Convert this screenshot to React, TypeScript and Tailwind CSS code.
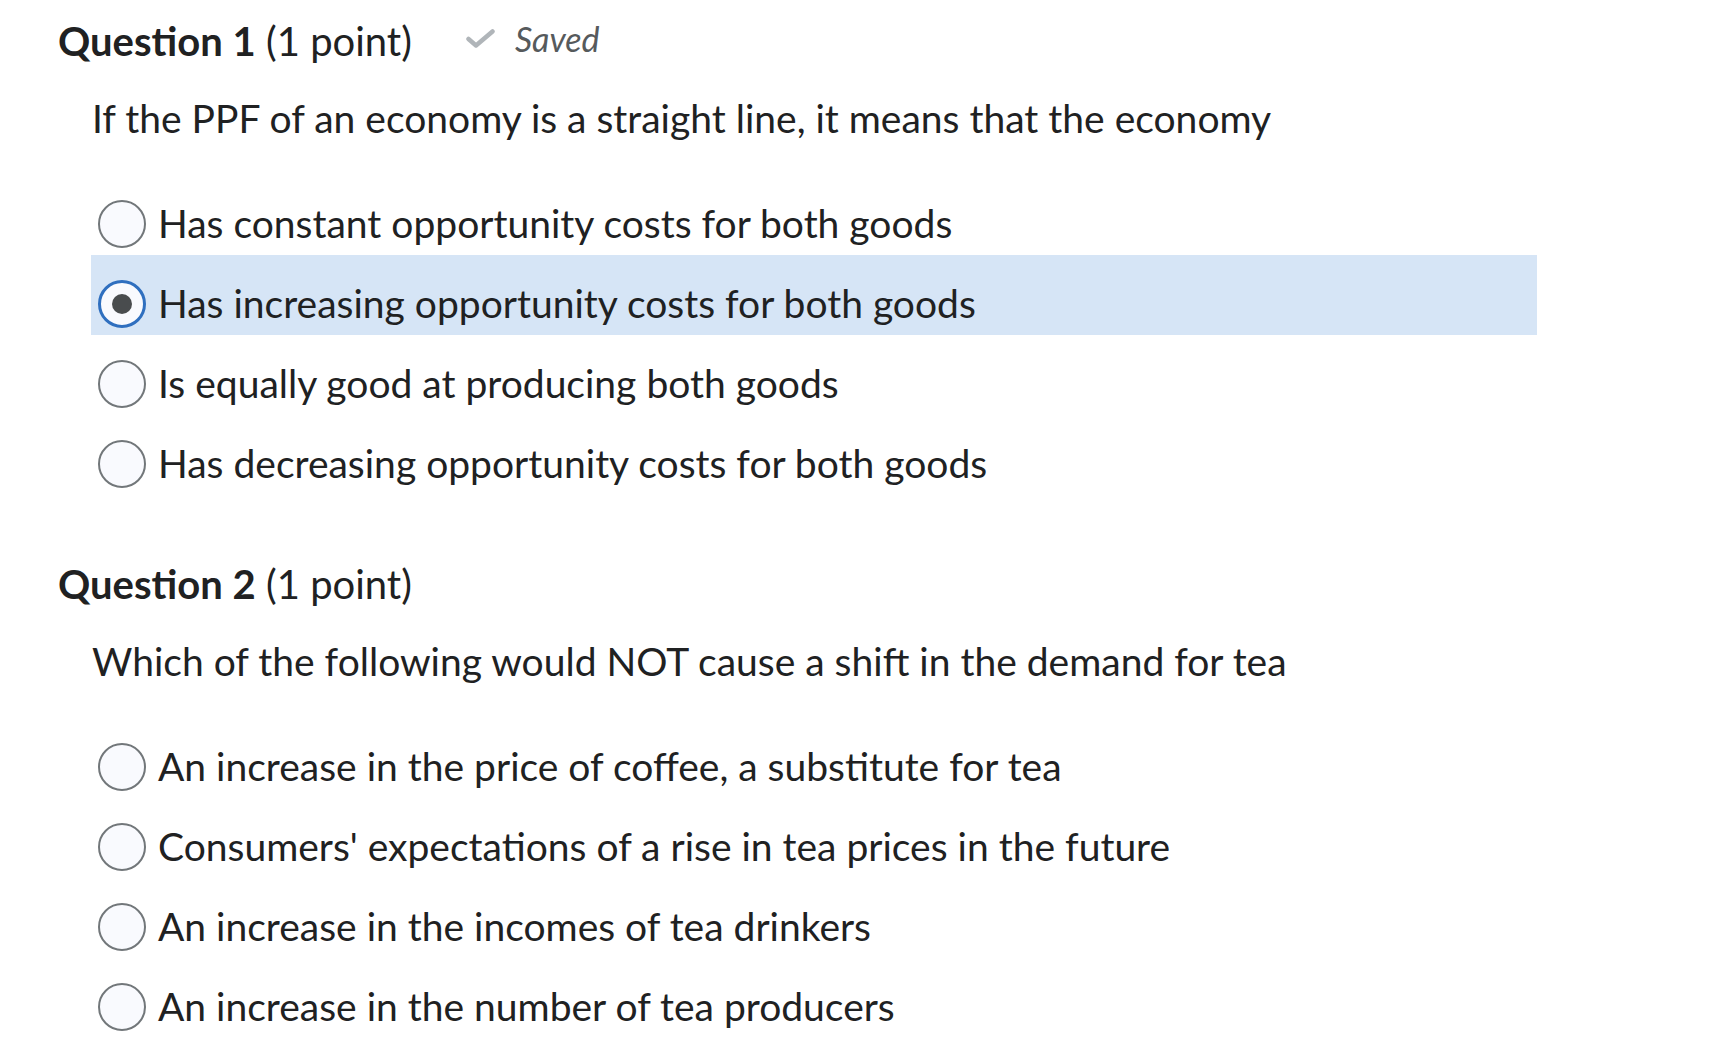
import React from "react";

type Q = {
  num: number;
  text: string;
  options: string[];
  selected: number | null;
  saved?: boolean;
};

const questions: Q[] = [
  {
    num: 1,
    text: "If the PPF of an economy is a straight line, it means that the economy",
    options: [
      "Has constant opportunity costs for both goods",
      "Has increasing opportunity costs for both goods",
      "Is equally good at producing both goods",
      "Has decreasing opportunity costs for both goods",
    ],
    selected: 1,
    saved: true,
  },
  {
    num: 2,
    text: "Which of the following would NOT cause a shift in the demand for tea",
    options: [
      "An increase in the price of coffee, a substitute for tea",
      "Consumers' expectations of a rise in tea prices in the future",
      "An increase in the incomes of tea drinkers",
      "An increase in the number of tea producers",
    ],
    selected: null,
  },
];

function Radio({ checked }: { checked: boolean }) {
  if (checked) {
    return (
      <span className="flex h-[48px] w-[48px] shrink-0 items-center justify-center rounded-full border-[3px] border-[#2f6fbf] bg-[#f9fafe]">
        <span className="h-[20px] w-[20px] rounded-full bg-[#494c4e]" />
      </span>
    );
  }
  return (
    <span className="h-[48px] w-[48px] shrink-0 rounded-full border-2 border-[#72777a] bg-[#f9fafe]" />
  );
}

function Check() {
  return (
    <svg width="29" height="19" viewBox="0 0 29 19" className="shrink-0">
      <path
        d="M2.5 10 L10 16.5 L26.5 2.5"
        fill="none"
        stroke="#b0b5b9"
        strokeWidth="4.5"
        strokeLinecap="round"
        strokeLinejoin="round"
      />
    </svg>
  );
}

function Question({ q, first }: { q: Q; first: boolean }) {
  return (
    <section className={first ? "pt-[18px]" : "pt-[66px]"}>
      <div className="flex h-[48px] items-center">
        <h2 className="pb-[2px] text-[40px] leading-[48px] text-[#202122]">
          <span className="font-bold">Question {q.num}</span> (1 point)
        </h2>
        {q.saved && (
          <div className="ml-[54px] flex items-center gap-[20px] pb-[7px]">
            <Check />
            <span className="text-[34px] italic text-[#565a5c]">Saved</span>
          </div>
        )}
      </div>
      <p className="mt-[28px] pl-[34px] text-[39px] leading-[48px] text-[#202122]">
        {q.text}
      </p>
      <div className="mt-[33px] pl-[33px]">
        {q.options.map((opt, i) => {
          const sel = q.selected === i;
          return (
            <label
              key={i}
              className={
                "flex h-[80px] w-[1446px] items-center gap-[12px] pl-[7px] pt-[18px] " +
                (sel ? "bg-[#d6e5f6]" : "")
              }
            >
              <Radio checked={sel} />
              <span className="pb-[3px] text-[39px] leading-[48px] text-[#202122]">{opt}</span>
            </label>
          );
        })}
      </div>
    </section>
  );
}

export default function App() {
  return (
    <div
      className="min-h-[1046px] w-[1728px] bg-white pl-[58px]"
      style={{ fontFamily: "Lato, 'Noto Sans', sans-serif" }}
    >
      {questions.map((q, i) => (
        <Question key={q.num} q={q} first={i === 0} />
      ))}
    </div>
  );
}
